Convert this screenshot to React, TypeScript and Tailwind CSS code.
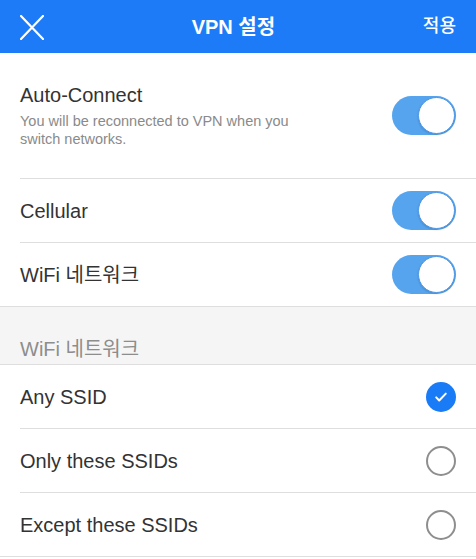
const font = "font-['Liberation_Sans','Noto_Sans_CJK_KR',sans-serif]";

function Toggle() {
  return (
    <div className="relative h-[39px] w-[64px] rounded-full bg-[#56a3ee]">
      <div className="absolute right-[1px] top-[1px] h-[37px] w-[37px] rounded-full border border-[#4a97e6] bg-white shadow-[0_1px_2px_rgba(0,0,0,0.15)]" />
    </div>
  );
}

function Checked() {
  return (
    <div className="flex h-[30px] w-[30px] items-center justify-center rounded-full bg-[#1a7bf6]">
      <svg width="16" height="16" viewBox="0 0 16 16" fill="none">
        <path d="M3.2 8.4l3 3.1L12.8 4.6" stroke="white" strokeWidth="2" strokeLinecap="round" strokeLinejoin="round" />
      </svg>
    </div>
  );
}

function Unchecked() {
  return <div className="h-[30px] w-[30px] rounded-full border-2 border-[#8e8e8e]" />;
}

function Row({ label, right, full }: { label: string; right: React.ReactNode; full?: boolean }) {
  return (
    <div className={full ? 'border-b border-[#dedede] pl-5' : 'pl-5'}>
      <div className={full ? 'flex h-[63px] items-center justify-between pr-5' : 'flex h-[64px] items-center justify-between border-b border-[#dedede] pr-5'}>
        <span className="text-[20px] leading-6 text-[#333333]">{label}</span>
        {right}
      </div>
    </div>
  );
}

export default function App() {
  return (
    <div className={`${font} min-h-[559px] w-full bg-white`}>
      <div className="flex h-[53px] items-center justify-between bg-[#1e7bf7] px-5 text-white">
        <svg width="24" height="25" viewBox="0 0 24 25" className="mt-[1px]">
          <path d="M1 1l22 23M23 1L1 24" stroke="white" strokeWidth="2.2" strokeLinecap="round" />
        </svg>
        <span className="text-[20px] font-bold">VPN 설정</span>
        <span className="text-[18px] font-medium">적용</span>
      </div>

      <div className="pl-5">
        <div className="flex h-[126px] items-center justify-between border-b border-[#dedede] pr-5">
          <div>
            <div className="text-[20px] leading-6 text-[#333333]">Auto-Connect</div>
            <div className="mt-[5px] w-[305px] text-[14.5px] leading-[18px] text-[#8a8a8a]">
              You will be reconnected to VPN when you switch networks.
            </div>
          </div>
          <Toggle />
        </div>
      </div>

      <Row label="Cellular" right={<Toggle />} />
      <Row label="WiFi 네트워크" right={<Toggle />} full />

      <div className="flex h-[58px] items-end border-b border-[#dedede] bg-[#f5f5f5] px-5 pb-[3px]">
        <span className="text-[20px] leading-6 text-[#8d8d8d]">WiFi 네트워크</span>
      </div>

      <Row label="Any SSID" right={<Checked />} />
      <Row label="Only these SSIDs" right={<Unchecked />} />
      <Row label="Except these SSIDs" right={<Unchecked />} full />
    </div>
  );
}
